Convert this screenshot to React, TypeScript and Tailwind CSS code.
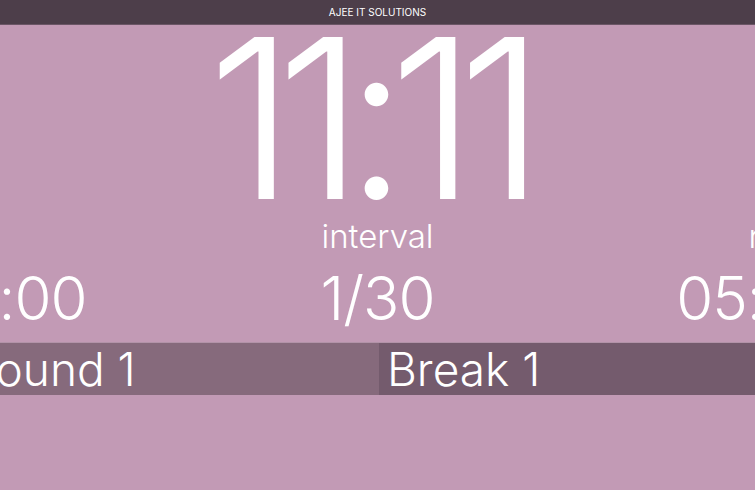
import React from 'react';

const COLUMNS = [
  { label: '', value: '00:00' },
  { label: 'interval', value: '1/30' },
  { label: 'remaining', value: '05:00' },
];

const SEGMENTS = [
  { name: 'Round 1', current: false },
  { name: 'Break 1', current: true },
  { name: 'Round 2', current: false },
];

export default function App() {
  return (
    <div
      className="w-[755px] h-[490px] overflow-hidden bg-[#c29ab5] text-white"
      style={{ fontFamily: 'Inter, "Noto Sans", sans-serif' }}
    >
      {/* Top bar */}
      <header className="h-[25px] bg-[#4d3e4a] border-b border-[#6b5666] flex items-center justify-center">
        <span className="text-[10px] leading-none">AJEE IT SOLUTIONS</span>
      </header>

      {/* Clock */}
      <div className="flex justify-center mt-[-18px] h-[201px]">
        <div className="text-[223px] font-light leading-none tracking-[-19px] mr-[21px]">11:11</div>
      </div>

      {/* Stats */}
      <div className="flex w-[1134px] ml-[-189.5px] mt-[10px]">
        {COLUMNS.map((c, i) => (
          <div key={i} className="w-[378px] flex flex-col items-center">
            <div className={`h-[36px] text-[33px] font-light leading-[36px] ${i === 2 ? 'self-start ml-[182px]' : ''}`}>
              {c.label}
            </div>
            <div className={`text-[60px] font-light leading-[72px] tracking-[-1px] mt-[8px] ${i === 0 ? 'ml-[14px]' : ''}`}>
              {c.value}
            </div>
          </div>
        ))}
      </div>

      {/* Segments */}
      <div className="flex ml-[-41px] mt-[8px] border-t border-[#b293a8]">
        {SEGMENTS.map((s) => (
          <div
            key={s.name}
            className={`shrink-0 w-[420px] h-[52px] px-[8px] flex items-center text-[46px] font-light leading-none ${
              s.current ? 'bg-[#745b6d]' : 'bg-[#866a7c]'
            }`}
          >
            {s.name}
          </div>
        ))}
      </div>
    </div>
  );
}
